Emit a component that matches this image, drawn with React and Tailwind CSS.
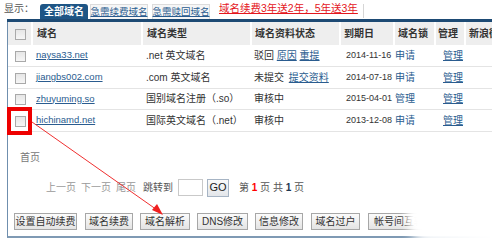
import React from "react";

const cols = ["w-[24px]", "w-[110px]", "w-[109px]", "w-[89px]", "w-[54px]", "w-[41px]", "w-[30px]", "w-[63px]"];

const rows = [
  { name: "naysa33.net", type: ".net 英文域名", status: "bohui", date: "2014-11-16", lock: "申请" },
  { name: "jiangbs002.com", type: ".com 英文域名", status: "weitijiao", date: "2014-07-18", lock: "申请" },
  { name: "zhuyuming.so", type: "国别域名注册（.so）", status: "审核中", date: "2015-04-01", lock: "管理" },
  { name: "hichinamd.net", type: "国际英文域名（.net）", status: "审核中", date: "2013-12-08", lock: "申请" },
];

function Checkbox() {
  return <span className="inline-block h-[11px] w-[11px] border border-[#a9a9a9] bg-gradient-to-b from-[#e6e6e6] to-[#f6f6f6] align-middle" />;
}

function Btn({ children, w }) {
  return (
    <span className={`flex h-[17px] ${w} items-center justify-center whitespace-nowrap border border-[#a7a7a7] bg-gradient-to-b from-[#fbfbfb] to-[#e4e4e4] text-[10px] text-[#333]`}>
      {children}
    </span>
  );
}

function Status({ s }) {
  if (s === "bohui")
    return (
      <span>
        驳回 <a className="text-[#2a5c8f] underline">原因</a> <a className="text-[#2a5c8f] underline">重提</a>
      </span>
    );
  if (s === "weitijiao")
    return (
      <span>
        未提交 <a className="ml-[2px] text-[#2a5c8f] underline">提交资料</a>
      </span>
    );
  return <span>{s}</span>;
}

export default function App() {
  return (
    <div className="relative h-[247px] w-[492px] overflow-hidden whitespace-nowrap bg-white font-['Liberation_Sans','Noto_Sans_CJK_SC',sans-serif] text-[10px] text-[#333]">
      {/* tabs */}
      <div className="flex h-[19px] items-end pl-[4px]">
        <span className="mb-[3px] mr-[6px] text-[#555]">显示：</span>
        <span className="flex h-[15px] w-[48px] items-center justify-center rounded-t-[3px] bg-[#1e5585] font-bold text-white">全部域名</span>
        <span className="ml-[2px] flex h-[15px] w-[58px] items-center justify-center border border-b-0 border-[#dcdcdc] bg-[#f6f6f6] text-[9.5px] text-[#2a5c8f] underline">急需续费域名</span>
        <span className="ml-[4px] flex h-[15px] w-[58px] items-center justify-center border border-b-0 border-[#dcdcdc] bg-[#f6f6f6] text-[9.5px] text-[#2a5c8f] underline">急需赎回域名</span>
        <span className="mb-[2px] ml-[9px] text-[10.5px] text-[#e4161d] underline">域名续费3年送2年，5年送3年</span>
        <span className="mb-[1px] ml-[5px] h-[14px] w-px bg-[#d6d6d6]" />
      </div>
      <div className="ml-[7px] h-[3px] bg-[#1d4a74]" />

      <div className="relative ml-[7px] h-[216px] border-b-2 border-l border-b-[#7f9ab4] border-l-[#6f8fae]">
        <table className="w-[520px] table-fixed border-collapse">
          <colgroup>
            {cols.map((c, i) => (
              <col key={i} className={c} />
            ))}
          </colgroup>
          <thead>
            <tr className="h-[23px] bg-[#eeeeee] text-left font-bold text-[#333]">
              <th className="border-r-2 border-white pl-[7px] font-normal"><Checkbox /></th>
              <th className="border-r-2 border-white pl-[4px]">域名</th>
              <th className="border-r-2 border-white pl-[4px]">域名类型</th>
              <th className="border-r-2 border-white pl-[3px]">域名资料状态</th>
              <th className="border-r-2 border-white pl-[3px]">到期日</th>
              <th className="border-r-2 border-white pl-[3px]">域名锁</th>
              <th className="border-r-2 border-white pl-[2px]">管理</th>
              <th className="overflow-hidden pl-[3px]">新浪微博</th>
            </tr>
          </thead>
          <tbody>
            {rows.map((r) => (
              <tr key={r.name} className="h-[21.5px] border-b border-[#e4e4e4]">
                <td className="pl-[7px]"><Checkbox /></td>
                <td className="pl-[4px] text-[9.5px]"><a className="text-[#2a5c8f] underline">{r.name}</a></td>
                <td className="overflow-hidden pl-[4px]">{r.type}</td>
                <td className="pl-[3px]"><Status s={r.status} /></td>
                <td className="overflow-hidden pl-[6px] text-[9px] text-[#333]">{r.date}</td>
                <td className="pl-[1px] text-[#2a5c8f]">{r.lock}</td>
                <td className="pl-[8px]"><a className="text-[#2a5c8f] underline">管理</a></td>
                <td />
              </tr>
            ))}
          </tbody>
        </table>

        {/* pager */}
        <div className="mt-[18px] pl-[12px] text-[#777]">首页</div>
        <div className="mt-[14px] flex items-center pl-[38px] text-[#999]">
          <span>上一页</span>
          <span className="ml-[5px]">下一页</span>
          <span className="ml-[5px]">尾页</span>
          <span className="ml-[7px] text-[#555]">跳转到</span>
          <span className="ml-[5px] h-[17px] w-[25px] border border-[#c9c9c9] bg-white" />
          <span className="ml-[4px] flex h-[18px] w-[22px] items-center justify-center border border-[#a6b4c4] bg-gradient-to-b from-[#fafafa] to-[#e3e6ea] text-[11px] text-[#222]">GO</span>
          <span className="ml-[10px] text-[#555]">第 <b className="text-[#f00]">1</b> 页 共 <b className="text-[#1d3550]">1</b> 页</span>
        </div>

        {/* buttons */}
        <div className="mt-[16px] flex gap-[7px] pl-[6px]">
          <Btn w="w-[63px]">设置自动续费</Btn>
          <span className="ml-[1px]"><Btn w="w-[48px]">域名续费</Btn></span>
          <Btn w="w-[50px]">域名解析</Btn>
          <Btn w="w-[51px]">DNS修改</Btn>
          <Btn w="w-[48px]">信息修改</Btn>
          <span className="ml-[1px]"><Btn w="w-[49px]">域名过户</Btn></span>
          <span className="ml-[1px]"><Btn w="w-[62px]">帐号间互转</Btn></span>
        </div>
        <div className="absolute bottom-[-2px] right-0 h-[2px] w-[90px] bg-gradient-to-r from-transparent to-white" />
      </div>

      {/* red highlight box */}
      <div className="absolute left-[7px] top-[107px] h-[28px] w-[25px] border-[4px] border-[#ee0000]" />

      {/* arrow */}
      <svg className="absolute left-0 top-0" width="492" height="247">
        <line x1="32" y1="122" x2="160" y2="212" stroke="#f03030" strokeWidth="1" />
        <polygon points="163,215 152,210 157,204" fill="#f02020" />
      </svg>

      {/* watermark haze */}
      <div className="absolute left-[406px] top-[194px] h-[48px] w-[100px] rounded-full bg-white blur-[4px]" />
    </div>
  );
}
